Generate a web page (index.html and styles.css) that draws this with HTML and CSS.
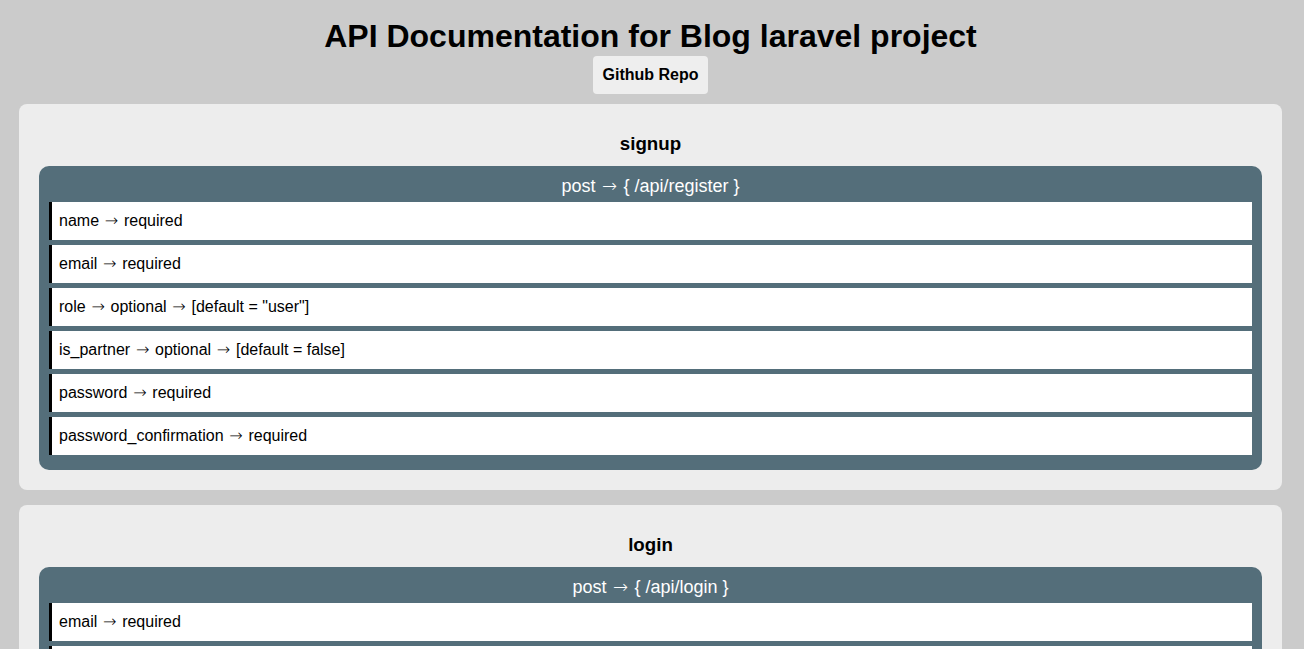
FILE: index.html
```html
<!DOCTYPE html>
<html lang="en">
<head>
<meta charset="utf-8">
<title>API Documentation for Blog laravel project</title>
<link rel="stylesheet" href="styles.css">
</head>
<body>
<header class="page-header">
  <h1 class="title">API Documentation for Blog laravel project</h1>
  <a class="repo-btn" href="#">Github Repo</a>
</header>
<main class="docs">
  <section class="endpoint-card">
    <h3 class="endpoint-name">signup</h3>
    <div class="route">
      <div class="route-head">post <span class="arrow">→</span> { /api/register }</div>
      <div class="param">name <span class="arrow">→</span> required</div>
      <div class="param">email <span class="arrow">→</span> required</div>
      <div class="param">role <span class="arrow">→</span> optional <span class="arrow">→</span> [default = "user"]</div>
      <div class="param">is_partner <span class="arrow">→</span> optional <span class="arrow">→</span> [default = false]</div>
      <div class="param">password <span class="arrow">→</span> required</div>
      <div class="param">password_confirmation <span class="arrow">→</span> required</div>
    </div>
  </section>
  <section class="endpoint-card">
    <h3 class="endpoint-name">login</h3>
    <div class="route">
      <div class="route-head">post <span class="arrow">→</span> { /api/login }</div>
      <div class="param">email <span class="arrow">→</span> required</div>
      <div class="param">password <span class="arrow">→</span> required</div>
    </div>
  </section>
</main>
</body>
</html>
```

FILE: styles.css
```css
html, body {
  margin: 0;
  padding: 0;
  background: #cbcbcb;
  font-family: "Liberation Sans", Arial, sans-serif;
  color: #000;
}

.page-header {
  display: flex;
  flex-direction: column;
  align-items: center;
  padding: 18px 22px 0 19px;
}

.title {
  margin: 0;
  font-size: 32px;
  line-height: 37px;
  font-weight: bold;
  text-align: center;
}

.repo-btn {
  margin-top: 1px;
  display: inline-block;
  background: #eeeeee;
  color: #000;
  text-decoration: none;
  font-weight: bold;
  font-size: 16px;
  line-height: 18px;
  padding: 10px 0;
  width: 115px;
  text-align: center;
  border-radius: 4px;
}

.docs {
  display: flex;
  flex-direction: column;
  gap: 15px;
  padding: 10px 22px 20px 19px;
}

.endpoint-card {
  background: #ededed;
  border-radius: 8px;
  padding: 20px;
}

.endpoint-name {
  margin: 9px 0 11px;
  font-size: 18.72px;
  line-height: 22px;
  font-weight: bold;
  text-align: center;
}

.route {
  background: #546e7a;
  border-radius: 10px;
  padding: 10px 10px 15px;
  display: flex;
  flex-direction: column;
  gap: 5px;
}

.route-head {
  color: #ffffff;
  font-size: 18px;
  line-height: 21px;
  text-align: center;
}

.param {
  background: #ffffff;
  border-left: 3px solid #000;
  padding: 10px 7px;
  font-size: 16px;
  line-height: 18px;
}

.arrow {
  display: inline-block;
  width: 1em;
  line-height: 0;
  text-align: center;
  font-family: "DejaVu Sans", sans-serif;
  font-weight: 200;
}
```
